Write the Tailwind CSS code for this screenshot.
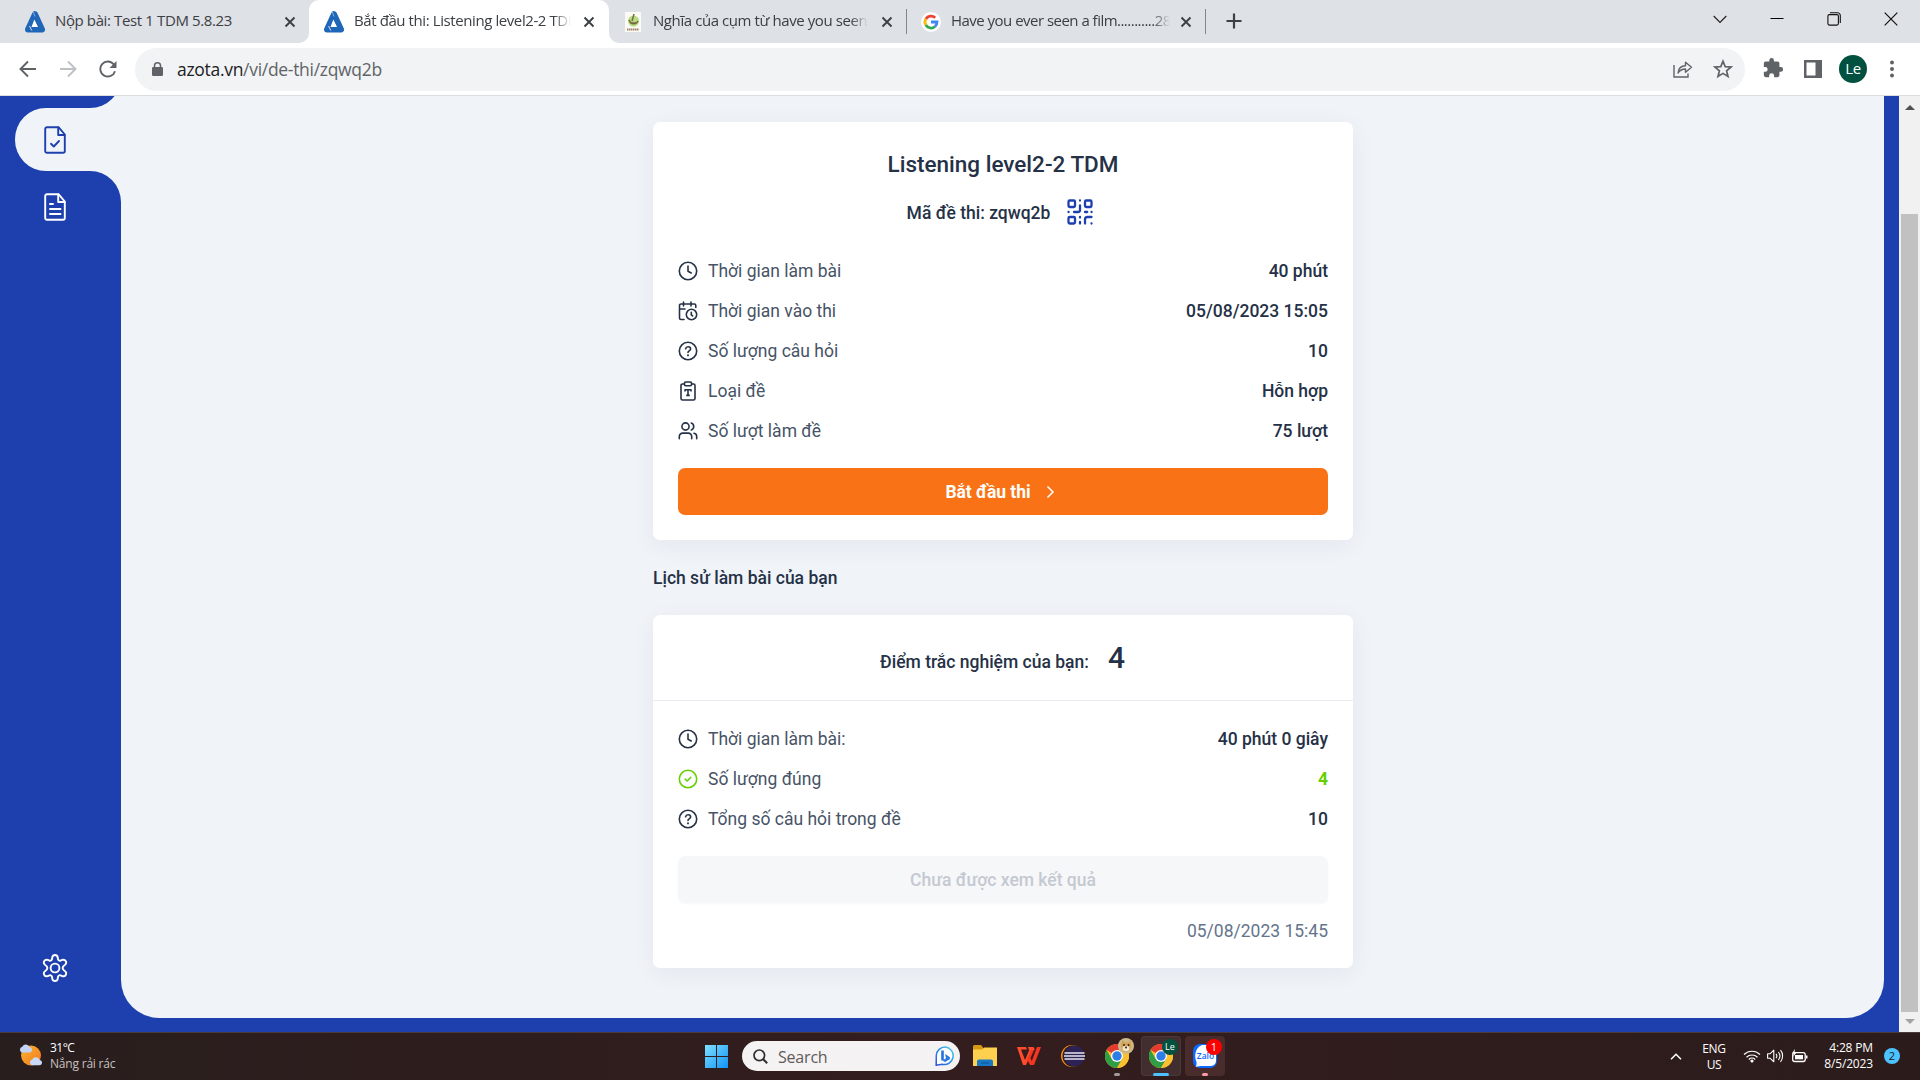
<!DOCTYPE html>
<html lang="vi">
<head>
<meta charset="utf-8">
<title>Bắt đầu thi: Listening level2-2 TDM</title>
<script src="https://cdn.jsdelivr.net/npm/@tailwindcss/browser@4"></script>
</head>
<body class="w-[1920px] h-[1080px] overflow-hidden flex flex-col font-['Open_Sans','Noto_Sans',sans-serif]">
<svg class="hidden">
  <defs>
    <symbol id="azota" viewBox="0 0 20 22"><path d="M10 3.200 17 18.500H3z" fill="none" stroke="#1f66b8" stroke-width="6" stroke-linejoin="round"/><path d="M9.300 8.500 13 16H6.500z" fill="#fff"/><path d="M4.500 15 6.800 19.500" stroke="#fff" stroke-width=".8"/><path d="M8.200.8 10 5.500" stroke="#9fc0e6" stroke-width=".8"/></symbol>
    <symbol id="x" viewBox="0 0 12 12"><path d="M1.5 1.5 10.5 10.5M10.5 1.5 1.5 10.5" stroke="#3c4043" stroke-width="1.9" fill="none"/></symbol>
    <symbol id="clock" viewBox="0 0 20 20"><g fill="none" stroke="currentColor" stroke-width="1.6" stroke-linecap="round" stroke-linejoin="round"><circle cx="10" cy="10" r="8.7"/><path d="M10 5v5.2l3.2 1.8"/></g></symbol>
    <symbol id="help" viewBox="0 0 20 20"><g fill="none" stroke="currentColor" stroke-width="1.6" stroke-linecap="round" stroke-linejoin="round"><circle cx="10" cy="10" r="8.7"/><path d="M7.6 7.7c.3-1.3 1.3-2 2.5-2 1.400 0 2.500.9 2.500 2.200 0 1.800-2.600 2-2.600 3.500"/><path d="M10 14.300v.1" stroke-width="1.900"/></g></symbol>
    <symbol id="chrome" viewBox="0 0 24 24"><circle cx="12" cy="12" r="12" fill="#fbc02d"/><path d="M12 12 1.600 6A12 12 0 0 1 22.400 6H12z" fill="#e33b2e"/><path d="M1.600 6A12 12 0 0 0 12 24L17.200 15 12 12 6.800 15z" fill="#2f9e44"/><path d="M12 6H22.400A12 12 0 0 1 12 24L17.200 15z" fill="#fbc02d"/><circle cx="12" cy="12" r="6" fill="#fff"/><circle cx="12" cy="12" r="4.700" fill="#2f7de9"/></symbol>
  </defs>
</svg>

<!-- Tab strip -->
<header class="h-[43px] shrink-0 bg-[#dee1e6] flex text-[15px] text-[#3c4043]">
  <div class="w-[309px] pl-[25px] pr-[13px] flex items-center">
    <svg class="w-5 h-[22px] shrink-0"><use href="#azota"/></svg>
    <span class="ml-[10px] mr-px w-[228px] h-[43px] leading-[41px] whitespace-nowrap tracking-[-0.38px]">Nộp bài: Test 1 TDM 5.8.23</span>
    <svg class="w-3 h-3 shrink-0"><use href="#x"/></svg>
  </div>
  <div class="relative w-[300px] pl-[15px] flex items-center bg-white rounded-t-[10px]">
    <svg class="absolute -left-[10px] bottom-0 size-[10px]" viewBox="0 0 10 10"><path d="M10 0V10H0A10 10 0 0 0 10 0z" fill="#fff"/></svg>
    <svg class="absolute -right-[10px] bottom-0 size-[10px]" viewBox="0 0 10 10"><path d="M0 0V10H10A10 10 0 0 1 0 0z" fill="#fff"/></svg>
    <svg class="w-5 h-[22px] shrink-0"><use href="#azota"/></svg>
    <span class="ml-[10px] mr-3 w-[217px] h-[43px] leading-[41px] overflow-hidden whitespace-nowrap tracking-[-0.41px] mask-r-from-92%">Bắt đầu thi: Listening level2-2 TDM</span>
    <svg class="w-3 h-3 shrink-0"><use href="#x"/></svg>
  </div>
  <div class="w-[298px] pl-4 flex items-center">
    <svg class="w-4 h-5 shrink-0" viewBox="0 0 16 20"><path d="M0 0h16v20H0z" fill="#fbfaf4"/><circle cx="8.500" cy="9" r="5.500" fill="#b5dc85"/><path d="M9 2 7 9M4 8c2 5 7 5 9 1M5 11h6" stroke="#77683d" stroke-width="1.400" fill="none"/><path d="M2 17.500h12" stroke="#a0816c" stroke-width="2" stroke-dasharray="1.500 .5"/></svg>
    <span class="ml-3 mr-[13px] w-[216px] h-[43px] leading-[41px] overflow-hidden whitespace-nowrap tracking-[-0.42px] mask-r-from-92%">Nghĩa của cụm từ have you seen</span>
    <svg class="w-3 h-3 shrink-0"><use href="#x"/></svg>
    <i class="w-px h-[25px] bg-[#80868b] ml-[13px]"></i>
  </div>
  <div class="w-[300px] pl-[14px] flex items-center">
    <svg class="size-5 shrink-0" viewBox="0 0 20 20"><circle cx="10" cy="10" r="10" fill="#fff"/><g fill="none" stroke-width="2.800"><path d="M14.200 5.800A6 6 0 0 0 4.800 7" stroke="#ea4335"/><path d="M4.800 7a6 6 0 0 0 0 6" stroke="#fbbc05"/><path d="M4.800 13a6 6 0 0 0 9.200 1.500" stroke="#34a853"/><path d="M10 10h6a6 6 0 0 1-2 4.500" stroke="#4285f4"/></g></svg>
    <span class="ml-[10px] mr-[10px] w-[219px] h-[43px] leading-[41px] overflow-hidden whitespace-nowrap tracking-[-0.52px] mask-r-from-92%">Have you ever seen a film...........28</span>
    <svg class="w-3 h-3 shrink-0"><use href="#x"/></svg>
    <i class="w-px h-[25px] bg-[#80868b] ml-[13px]"></i>
  </div>
  <div class="flex-1 flex items-center pl-[19px]">
    <svg class="size-4 -mt-px" viewBox="0 0 16 16"><path d="M8 .5v15M.5 8h15" stroke="#3c4043" stroke-width="2.200"/></svg>
    <div class="ml-auto flex items-center gap-[43px] pr-[22px] h-[37px] self-start">
      <svg class="size-[14px]" viewBox="0 0 14 14"><path d="M.7 4 7 10.300 13.300 4" fill="none" stroke="#222" stroke-width="1.200"/></svg>
      <svg class="size-[14px]" viewBox="0 0 14 14"><path d="M.5 6.500h13" stroke="#000"/></svg>
      <svg class="size-[14px]" viewBox="0 0 14 14"><g fill="none" stroke="#111" stroke-width="1.100"><rect x=".9" y="2.600" width="10.500" height="10.500" rx="1.500"/><path d="M3 .8h7.500a2.800 2.800 0 0 1 2.800 2.800V11"/></g></svg>
      <svg class="size-[14px]" viewBox="0 0 14 14"><path d="M.7.7 13.300 13.300M13.300.7.7 13.300" stroke="#111" stroke-width="1.200"/></svg>
    </div>
  </div>
</header>

<!-- Toolbar -->
<div class="h-[53px] shrink-0 bg-white border-b border-[#dadce0] flex items-center pl-[19px] pr-[22px]">
  <svg class="size-[18px] -mt-px" viewBox="0 0 18 18"><path d="M17 9H2M9 1.500 1.500 9 9 16.500" fill="none" stroke="#5f6368" stroke-width="1.900"/></svg>
  <svg class="size-[18px] -mt-px ml-[22px]" viewBox="0 0 18 18"><path d="M1 9h15M9 1.500 16.500 9 9 16.500" fill="none" stroke="#bdc1c6" stroke-width="1.900"/></svg>
  <svg class="size-[18px] -mt-px ml-[22px]" viewBox="0 0 18 18"><path d="M16 11.200A7.500 7.500 0 1 1 14.800 4.500L16.500 6.500" fill="none" stroke="#5f6368" stroke-width="1.900"/><path d="M17.500 1V8H10.500z" fill="#5f6368"/></svg>
  <div class="ml-[18px] w-[1610px] h-[43px] rounded-full bg-[#f1f3f4] flex items-center pl-[17px] pr-[13px]">
    <svg class="w-[11px] h-[14px]" viewBox="0 0 11 14"><rect y="5" width="11" height="9" rx="1.200" fill="#5f6368"/><path d="M2.500 5.500V3.800a3 3 0 0 1 6 0v1.700" fill="none" stroke="#5f6368" stroke-width="1.500"/></svg>
    <span class="ml-[14px] text-[17.500px] tracking-[-0.3px] text-[#5f6368]"><span class="text-[#202124]">azota.vn</span>/vi/de-thi/zqwq2b</span>
    <svg class="ml-auto w-[20px] h-[18px]" viewBox="0 0 20 18"><g fill="none" stroke="#5f6368" stroke-width="1.400"><path d="M1 5V17H15V13.500"/><path d="M5 13C5.500 8 8.500 5.800 12.500 5.800V2.200L18.500 7.300 12.500 12.300V9C9.500 9 7 10 5 13z" stroke-linejoin="round"/></g></svg>
    <svg class="ml-5 -mr-px size-[20px]" viewBox="0 0 20 20"><path d="M10 2.200 12.200 7.600 18 8 13.600 11.800 15 17.500 10 14.400 5 17.500 6.400 11.800 2 8 7.800 7.600z" fill="none" stroke="#5f6368" stroke-width="1.700"/></svg>
  </div>
  <svg class="ml-[17px] size-[22px] -mt-[3px]" viewBox="0 0 24 24"><path d="M20.500 11H19V7a2 2 0 0 0-2-2h-4V3.500a2.500 2.500 0 0 0-5 0V5H4a2 2 0 0 0-2 2v3.800h1.500a2.700 2.700 0 0 1 0 5.400H2V20a2 2 0 0 0 2 2h3.800v-1.500a2.700 2.700 0 0 1 5.400 0V22H17a2 2 0 0 0 2-2v-4h1.500a2.500 2.500 0 0 0 0-5z" fill="#5f6368"/></svg>
  <svg class="ml-5 size-[18px] -mt-px" viewBox="0 0 18 18"><path fill-rule="evenodd" d="M0 0H18V18H0zM2.500 2.500V15.500H11.500V2.500z" fill="#5f6368"/></svg>
  <div class="ml-[17px] size-7 -mt-px rounded-full bg-[#00513f] text-white text-[15px] tracking-[-0.3px] leading-[27px] text-center">Le</div>
  <svg class="ml-auto w-3 h-5 -mt-px" viewBox="0 0 12 20"><g fill="#5f6368"><circle cx="6" cy="3.500" r="2"/><circle cx="6" cy="10" r="2"/><circle cx="6" cy="16.500" r="2"/></g></svg>
</div>

<!-- Page -->
<div class="h-[936px] shrink-0 flex bg-[#1e40af] font-[Roboto,'Noto_Sans',sans-serif] text-[17.500px] text-[#253146]">
  <nav class="w-[121px] flex flex-col bg-[#f0f4f9]">
    <div class="h-3 overflow-hidden flex flex-col justify-end"><div class="h-[62px] shrink-0 w-[121px] bg-[#1e40af] rounded-br-[31px]"></div></div>
    <div class="h-[63px] bg-[#1e40af] pl-[15px]">
      <div class="h-full bg-[#f0f4f9] rounded-l-[31px] pl-[29px] flex items-center">
        <svg class="w-[22px] h-[28px]" viewBox="0 0 22 28"><g fill="none" stroke="#1e40af" stroke-width="1.900" stroke-linejoin="round" stroke-linecap="round"><path d="M3 1.200H14.500L20.800 8.500V25a1.800 1.800 0 0 1-1.800 1.800H3A1.800 1.800 0 0 1 1.200 25V3A1.800 1.800 0 0 1 3 1.200z"/><path d="M14.200 1.500V9H20.500"/><path d="M7 17.800 9.800 20.500 15 15"/></g></svg>
      </div>
    </div>
    <div class="flex-1 bg-[#1e40af] rounded-tr-[31px] pl-[42px] pt-[22px] pb-[50px] flex flex-col justify-between">
      <svg class="ml-[2px] w-[22px] h-[28px]" viewBox="0 0 22 28"><g fill="none" stroke="#fff" stroke-width="1.900" stroke-linejoin="round" stroke-linecap="round"><path d="M3 1.200H14.500L20.800 8.500V25a1.800 1.800 0 0 1-1.800 1.800H3A1.800 1.800 0 0 1 1.200 25V3A1.800 1.800 0 0 1 3 1.200z"/><path d="M14.200 1.500V9H20.500M6 11H9M6 16H16.500M6 21H16.500"/></g></svg>
      <svg class="w-[26px] h-[28px]" viewBox="0 0 26 28"><g fill="none" stroke="#fff" stroke-width="1.900" stroke-linejoin="round"><circle cx="13" cy="14" r="4.400"/><path d="M10.300 3.300C10.600 1.800 11.500 1 13 1S15.400 1.800 15.700 3.300L16 5.300C16.300 6.300 17.400 7 18.500 6.600L20.300 5.900C21.800 5.400 23 5.900 23.700 7.100 24.500 8.400 24.300 9.600 23.200 10.600L21.700 11.900C20.300 13 20.300 15 21.700 16.100L23.200 17.400C24.300 18.400 24.500 19.600 23.700 20.900 23 22.100 21.800 22.600 20.300 22.100L18.500 21.400C17.400 21 16.300 21.700 16 22.700L15.700 24.700C15.400 26.200 14.500 27 13 27S10.600 26.200 10.300 24.700L10 22.700C9.700 21.700 8.600 21 7.500 21.400L5.700 22.100C4.200 22.600 3 22.100 2.300 20.900 1.500 19.600 1.700 18.400 2.800 17.400L4.300 16.100C5.700 15 5.700 13 4.300 11.900L2.800 10.600C1.700 9.600 1.500 8.400 2.300 7.100 3 5.900 4.200 5.400 5.700 5.900L7.500 6.600C8.600 7 9.700 6.300 10 5.300z"/></g></svg>
    </div>
  </nav>

  <main class="w-[1763px] h-[922px] bg-[#f0f4f9] rounded-b-[38px] pl-[532px] pt-[26px]">
    <section class="w-[700px] h-[418px] bg-white rounded-[7px] px-[25px] shadow-[0_5px_25px_rgba(30,41,59,0.06)] flex flex-col">
      <h1 class="mt-[25px] h-[34px] leading-[34px] text-center text-[22.500px] font-medium">Listening level2-2 TDM</h1>
      <div class="mt-[14px] h-[34px] flex items-center justify-center gap-[17px] pr-[6px] font-medium">
        <span class="pt-[2px]">Mã đề thi: zqwq2b</span>
        <svg class="size-[26px]" viewBox="0 0 26 26"><g fill="none" stroke="#1e40af" stroke-width="2.300" stroke-linecap="round" stroke-linejoin="round"><rect x="1.500" y="1.500" width="6.500" height="6.500" rx="1.200"/><rect x="18" y="1.500" width="6.500" height="6.500" rx="1.200"/><rect x="1.500" y="18" width="6.500" height="6.500" rx="1.200"/><path d="M13 1.500v.1M13 6.500v4.500a2 2 0 0 1-2 2H7M1.500 13h.1M18 13h2.200M24.500 13h.1M13 18v.5M13 23v1.500M18 24.500V20.500A2.500 2.500 0 0 1 20.500 18H24.500M24.500 24.500v.1"/></g></svg>
      </div>
      <div class="mt-[22px] leading-10">
        <div class="h-10 flex items-center"><svg class="size-5"><use href="#clock"/></svg><span class="ml-[10px] text-[#475366]">Thời gian làm bài</span><b class="ml-auto font-medium">40 phút</b></div>
        <div class="h-10 flex items-center"><svg class="size-5" viewBox="0 0 20 20"><g fill="none" stroke="currentColor" stroke-width="1.600" stroke-linecap="round" stroke-linejoin="round"><path d="M5.500 1v4M13 1v4M17.800 6.500V4.500a1.500 1.500 0 0 0-1.500-1.500H3A1.500 1.500 0 0 0 1.500 4.500V17A1.500 1.500 0 0 0 3 18.500H6M1.500 8H7"/><circle cx="13.500" cy="13.500" r="5.200"/><path d="M13.300 11.200v2.600l1.300 1.100"/></g></svg><span class="ml-[10px] text-[#475366]">Thời gian vào thi</span><b class="ml-auto font-medium">05/08/2023 15:05</b></div>
        <div class="h-10 flex items-center"><svg class="size-5"><use href="#help"/></svg><span class="ml-[10px] text-[#475366]">Số lượng câu hỏi</span><b class="ml-auto font-medium">10</b></div>
        <div class="h-10 flex items-center"><svg class="size-5" viewBox="0 0 20 20"><g fill="none" stroke="currentColor" stroke-width="1.600" stroke-linejoin="round"><path d="M6.500 3H4.500A1.500 1.500 0 0 0 3 4.500v13A1.500 1.500 0 0 0 4.500 19h11a1.500 1.500 0 0 0 1.500-1.500v-13A1.500 1.500 0 0 0 15.500 3H13.500"/><rect x="6.500" y="1" width="7" height="3.800" rx="1"/><path d="M7 10.500V8.800h6v1.700M10 8.800v5.400M8.200 14.400h3.600"/></g></svg><span class="ml-[10px] text-[#475366]">Loại đề</span><b class="ml-auto font-medium">Hỗn hợp</b></div>
        <div class="h-10 flex items-center"><svg class="size-5" viewBox="0 0 20 20"><g fill="none" stroke="currentColor" stroke-width="1.600" stroke-linecap="round" stroke-linejoin="round"><circle cx="7.500" cy="5.500" r="3.600"/><path d="M1.300 17.800V15.500a3.400 3.400 0 0 1 3.400-3.400h5.600a3.400 3.400 0 0 1 3.400 3.400v2.300M13.300 2.100a3.600 3.600 0 0 1 0 6.800M16 12.300a3.400 3.400 0 0 1 2.700 3.300v2.200"/></g></svg><span class="ml-[10px] text-[#475366]">Số lượt làm đề</span><b class="ml-auto font-medium">75 lượt</b></div>
      </div>
      <button class="mt-[17px] h-[47px] w-full rounded-[7px] bg-[#f97316] text-white font-bold flex items-center justify-center gap-4"><span class="pt-[2px] tracking-[-0.05px]">Bắt đầu thi</span><svg class="w-[14px] h-[14px]" viewBox="0 0 14 14"><path d="M.5 1.500 6 7 .5 12.500" fill="none" stroke="#fff" stroke-width="1.500"/></svg></button>
    </section>

    <h2 class="mt-[26px] h-[25px] leading-[25px] font-medium">Lịch sử làm bài của bạn</h2>

    <section class="mt-6 w-[700px] h-[353px] bg-white rounded-[7px] shadow-[0_5px_25px_rgba(30,41,59,0.06)] flex flex-col">
      <div class="h-[86px] border-b border-[#e8ecf0] flex items-baseline justify-center gap-[19px] pt-[22px] pr-px font-medium">Điểm trắc nghiệm của bạn:<span class="text-[30px] leading-[42px]">4</span></div>
      <div class="px-[25px] pt-[18px] leading-10">
        <div class="h-10 flex items-center"><svg class="size-5"><use href="#clock"/></svg><span class="ml-[10px] text-[#475366]">Thời gian làm bài:</span><b class="ml-auto font-medium">40 phút 0 giây</b></div>
        <div class="h-10 flex items-center"><svg class="size-5" viewBox="0 0 20 20"><g fill="none" stroke="#65d000" stroke-width="1.600" stroke-linecap="round" stroke-linejoin="round"><circle cx="10" cy="10" r="8.700"/><path d="M7.200 10.200 9.200 12 12.800 8.300"/></g></svg><span class="ml-[10px] text-[#475366]">Số lượng đúng</span><b class="ml-auto font-bold text-[#65d000]">4</b></div>
        <div class="h-10 flex items-center"><svg class="size-5"><use href="#help"/></svg><span class="ml-[10px] text-[#475366]">Tổng số câu hỏi trong đề</span><b class="ml-auto font-medium">10</b></div>
        <div class="mt-[17px] h-[47px] rounded-[7px] bg-[#f6f7f9] text-[#c4c9d1] font-medium leading-[49px] text-center shadow-[0_1px_2px_rgba(0,0,0,0.03)]">Chưa được xem kết quả</div>
        <div class="mt-2 text-right text-[#64748b]">05/08/2023 15:45</div>
      </div>
    </section>
  </main>

  <div class="ml-auto w-[21px] bg-[#f1f1f1] flex flex-col items-center pt-[9px] pb-[8px]">
    <svg class="w-[10px] h-[5px]" viewBox="0 0 10 5"><path d="M0 5 5 0l5 5z" fill="#505050"/></svg>
    <i class="mt-[104px] w-[17px] h-[798px] bg-[#c1c1c1]"></i>
    <svg class="mt-[7px] w-[10px] h-[5px]" viewBox="0 0 10 5"><path d="M0 0 5 5l5-5z" fill="#a3a3a3"/></svg>
  </div>
</div>

<!-- Taskbar -->
<footer class="h-12 shrink-0 border-t border-[#4a3a3a] bg-linear-to-r from-[#281e1d] via-[#341d1e] to-[#2b1c1b] flex items-center text-white text-[12px]">
  <svg class="ml-[19px] -mt-[3px] w-6 h-[22px]" viewBox="0 0 24 22"><defs><linearGradient id="sun" x1="0" y1="0" x2="1" y2="1"><stop stop-color="#f7b733"/><stop offset="1" stop-color="#f4761b"/></linearGradient></defs><circle cx="12" cy="11.500" r="10" fill="url(#sun)"/><path d="M3 8.500a3 3 0 0 1 .3-5.800A4 4 0 0 1 10.500 3a2.800 2.800 0 0 1 .5 5.500z" fill="#c3d3f7"/><path d="M13 21.300a3 3 0 0 1 .3-5.800 4 4 0 0 1 7.400.5 2.700 2.700 0 0 1 .3 5.300z" fill="#cbd9f8"/></svg>
  <div class="ml-[7px] w-[655px] -mt-[2px] leading-4 tracking-[-0.2px]"><div class="tracking-[-0.5px]">31°C</div><div class="text-[#c9c1c0]">Nắng rải rác</div></div>
  <svg class="size-[23px] -mt-px" viewBox="0 0 23 23"><defs><linearGradient id="win" x1="0" y1="0" x2="1" y2="1"><stop stop-color="#7fe0ff"/><stop offset="1" stop-color="#0f93f5"/></linearGradient></defs><path d="M0 0h11v11H0zM12 0h11v11H12zM0 12h11v11H0zM12 12h11v11H12z" fill="url(#win)"/></svg>
  <div class="ml-[14px] -mt-px w-[218px] h-[30px] rounded-full bg-[#f4f2f2] flex items-center pl-[11px] pr-[5px] text-[16px] text-[#5f5b5b]">
    <svg class="size-[15px]" viewBox="0 0 15 15"><circle cx="6.300" cy="6.300" r="5.300" fill="none" stroke="#2d2d2d" stroke-width="1.700"/><path d="M10 10l4.200 4.200" stroke="#2d2d2d" stroke-width="2"/></svg>
    <span class="ml-[10px] pt-px tracking-[-0.2px]">Search</span>
    <svg class="ml-auto size-5" viewBox="0 0 20 20"><defs><linearGradient id="bing" x1="0" y1="1" x2="1" y2="0"><stop stop-color="#2a4fd8"/><stop offset=".6" stop-color="#2d9be8"/><stop offset="1" stop-color="#47d3e5"/></linearGradient></defs><path d="M10.500 1A8.800 8.800 0 1 1 7 18.200L1.200 19.200 1.300 9.500A9 9 0 0 1 10.500 1z" fill="#fff" stroke="url(#bing)" stroke-width="1.500"/><path d="M7.500 4.500V14.500" stroke="#2473d9" stroke-width="2.600"/><path d="M10 8 14 10.500a2 2 0 0 1 .5 3L10 16 7.500 14.500 11 12.300z" fill="#2c7be0"/></svg>
  </div>
  <div class="ml-[5px] -mt-px flex gap-1">
    <div class="size-10 flex items-center justify-center"><svg class="w-6 h-[22px]" viewBox="0 0 24 22"><path d="M0 1.500A1.500 1.500 0 0 1 1.500 0H8l2 2.500V6H0z" fill="#d69a12"/><path d="M0 4.500H9l2-2H24V21H0z" fill="#fdd04f"/><path d="M4 21V16.500A2 2 0 0 1 6 14.500H18a2 2 0 0 1 2 2V21z" fill="#1878c6"/><path d="M8 18h8" stroke="#0e5a9c" stroke-width="1.200"/></svg></div>
    <div class="size-10 flex items-center justify-center"><svg class="w-6 h-[18px]" viewBox="0 0 24 18"><path d="M0 0H9L10 2.500H4L8 13 12.500 2.500H16L9 18H6z" fill="#ff4b2b"/><path d="M10 12 14 3H17L13.500 11 14.800 14 20 0H24L17 18H13z" fill="#f4351f"/><path d="M11 0H16.500L18 3H12z" fill="#ff4b2b"/></svg></div>
    <div class="size-10 flex items-center justify-center"><svg class="w-6 h-[22px]" viewBox="0 0 24 22"><circle cx="11" cy="11" r="11" fill="#f7941e"/><circle cx="12.300" cy="11" r="10.800" fill="#341d1e"/><circle cx="13.500" cy="11" r="10.300" fill="#2c2255"/><path d="M3.500 8h20M3 11h21M3.500 14h20" stroke="#e6e6f0" stroke-width="1.600"/></svg></div>
    <div class="relative size-10 flex items-center justify-center"><svg class="size-6"><use href="#chrome"/></svg>
      <svg class="absolute left-[21px] top-[2px] size-4" viewBox="0 0 16 16"><circle cx="8" cy="8" r="8" fill="#cdb98b"/><path d="M3 6 4.500 2 7 4.500H10L12.500 2 13.500 7C14 11 11 14 8 14S2.500 11 3 6z" fill="#d4a355"/><ellipse cx="8" cy="10.500" rx="3.400" ry="2.800" fill="#f2e6cc"/><circle cx="6" cy="7" r=".9" fill="#2a1c10"/><circle cx="10.500" cy="7" r=".9" fill="#2a1c10"/><circle cx="8" cy="9.500" r="1" fill="#2a1c10"/></svg>
      <i class="absolute left-[17px] bottom-0 w-[6px] h-[3px] rounded-full bg-[#a39999]"></i></div>
    <div class="relative size-10 flex items-center justify-center rounded bg-white/8 border border-white/5"><svg class="size-6"><use href="#chrome"/></svg>
      <span class="absolute left-[20px] top-[2px] size-4 rounded-full bg-[#00513f] text-[9px] leading-4 text-center">Le</span>
      <i class="absolute left-[11px] -bottom-px w-4 h-[3px] rounded-full bg-[#4cc2ff]"></i></div>
    <div class="relative size-10 flex items-center justify-center rounded bg-[#ff9ca0]/12"><svg class="size-6" viewBox="0 0 24 24"><rect width="24" height="24" rx="7" fill="#0a68ff"/><path d="M9 1H18a5 5 0 0 1 5 5V17a5 5 0 0 1-5 5H9C6 22 4.500 23 2.500 22.500 4 21 3.500 20 3.500 18 1 12 2 4 9 1z" fill="#fff"/><text x="12.500" y="14.500" text-anchor="middle" font-family="Open Sans" font-size="8.500" font-weight="600" fill="#0a68ff">Zalo</text></svg>
      <span class="absolute left-[21px] top-[3px] size-4 rounded-full bg-[#ff0000] text-[11px] leading-4 text-center">1</span>
      <i class="absolute left-[17px] bottom-0 w-[6px] h-[3px] rounded-full bg-[#ff99a4]"></i></div>
  </div>
  <svg class="ml-auto -mt-px w-3 h-[7px]" viewBox="0 0 12 7"><path d="M1 6.200 6 1.200l5 5" fill="none" stroke="#fff" stroke-width="1.500"/></svg>
  <div class="ml-[17px] w-[30px] leading-4 text-center tracking-[-0.3px]">ENG<br>US</div>
  <svg class="ml-[14px] -mt-[2px] w-[18px] h-[14px]" viewBox="0 0 18 14"><g fill="none" stroke="#fff" stroke-width="1.200"><path d="M1 5.500a11.500 11.500 0 0 1 16 0M3.500 8.200a8 8 0 0 1 11 0M5.800 10.500a4.600 4.600 0 0 1 6.400 0"/></g><circle cx="9" cy="12" r="1.600" fill="#fff"/></svg>
  <svg class="ml-[6px] -mt-[2px] w-[17px] h-[14px]" viewBox="0 0 17 14"><g fill="none" stroke="#fff" stroke-width="1.100" stroke-linejoin="round"><path d="M.6 4.800H3L6.800 1.200V12.800L3 9.200H.6zM9 4.800a3.500 3.500 0 0 1 0 4.400M11.300 3a6.200 6.200 0 0 1 0 8M13.500 1.200a9 9 0 0 1 0 11.600"/></g></svg>
  <svg class="ml-[7px] -mt-[2px] w-[17px] h-[14px]" viewBox="0 0 17 14"><rect x="1.700" y="3.700" width="12.500" height="8.800" rx="2" fill="none" stroke="#fff" stroke-width="1.300"/><rect x="4" y="6" width="8" height="4.300" fill="#fff"/><path d="M15 6.500h1.500v3H15zM4 0 .8 4.500H3L2 8 5.500 3.500H3.500z" fill="#fff"/></svg>
  <div class="ml-4 w-[49px] -mt-px whitespace-nowrap flex flex-col items-end leading-4 tracking-[-0.15px]"><span>4:28 PM</span><span>8/5/2023</span></div>
  <span class="ml-[11px] mr-5 -mt-px size-4 rounded-full bg-[#4cc2ff] text-[11px] text-[#1b1b1b] leading-4 text-center">2</span>
</footer>
</body>
</html>
